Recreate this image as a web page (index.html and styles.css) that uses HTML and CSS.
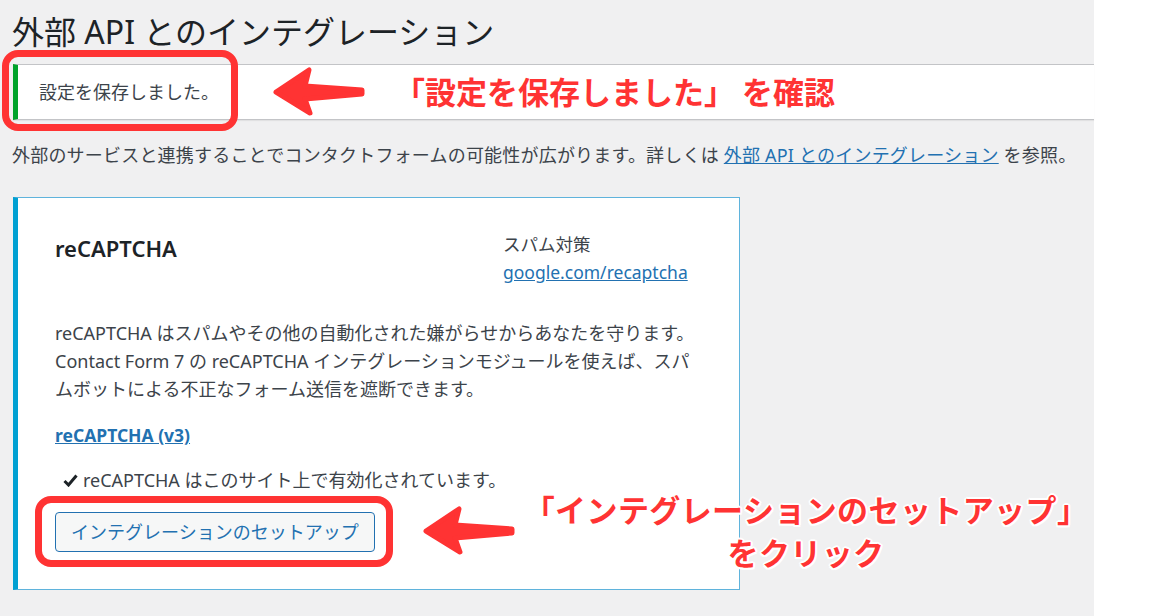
FILE: index.html
```html
<!DOCTYPE html>
<html lang="ja">
<head>
<meta charset="utf-8">
<title>外部 API とのインテグレーション</title>
<link rel="stylesheet" href="styles.css">
</head>
<body>
<div class="page">
  <h1 class="title">外部 API とのインテグレーション</h1>
  <div class="notice"><p>設定を保存しました。</p></div>
  <p class="intro">外部のサービスと連携することでコンタクトフォームの可能性が広がります。詳しくは <a href="#">外部 API とのインテグレーション</a> を参照。</p>

  <div class="card">
    <div class="card-head">
      <h2 class="card-title">reCAPTCHA</h2>
      <div class="infobox">
        <div>スパム対策</div>
        <a href="#">google.com/recaptcha</a>
      </div>
    </div>
    <p class="desc">reCAPTCHA はスパムやその他の自動化された嫌がらせからあなたを守ります。<br>Contact Form 7 の reCAPTCHA インテグレーションモジュールを使えば、スパ<br>ムボットによる不正なフォーム送信を遮断できます。</p>
    <p class="version"><a href="#">reCAPTCHA (v3)</a></p>
    <p class="status"><svg class="check" width="15" height="13" viewBox="0 0 15 13"><path d="M1.5 7 L5.5 11 L13.5 1.5" fill="none" stroke="#1d2327" stroke-width="3"/></svg>reCAPTCHA はこのサイト上で有効化されています。</p>
    <p class="action"><a href="#" class="button">インテグレーションのセットアップ</a></p>
  </div>

  <div class="mark mark-notice"></div>
  <svg class="arrow arrow-notice" width="100" height="60" viewBox="0 0 100 60"><path d="M6 30 L39 8 L35 24 L92 28 L92 32 L35 37 L40 51 Z" fill="#ff3333" stroke="#ff3333" stroke-width="5" stroke-linejoin="round"/></svg>
  <div class="label label-notice">「設定を保存しました」 を確認</div>

  <div class="mark mark-button"></div>
  <svg class="arrow arrow-button" width="100" height="60" viewBox="0 0 100 60"><path d="M6 30 L39 8 L35 24 L92 28 L92 32 L35 37 L40 51 Z" fill="#ff3333" stroke="#ff3333" stroke-width="5" stroke-linejoin="round"/></svg>
  <div class="label label-button">「インテグレーションのセットアップ」<br>をクリック</div>
</div>
</body>
</html>
```

FILE: styles.css
```css
* { box-sizing: border-box; }

html, body {
  margin: 0;
  background: #fff;
}

body {
  font-family: "Noto Sans", "Noto Sans CJK JP", sans-serif;
  color: #3c434a;
  font-size: 18px;
}

.page {
  position: relative;
  width: 1094px;
  min-height: 616px;
  background: #f0f0f1;
  padding: 11px 0 0 13px;
}

.title {
  margin: 0 0 0 -1px;
  font-size: 32px;
  line-height: 42px;
  font-weight: 400;
  color: #1d2327;
}

.notice {
  margin-top: 11px;
  background: #fff;
  border-top: 1px solid #c3c4c7;
  border-bottom: 1px solid #c3c4c7;
  border-left: 5px solid #00a32a;
  box-shadow: 0 1px 1px rgba(0, 0, 0, 0.06);
  padding: 14px 0 14px 21px;
}

.notice p {
  margin: 0;
  line-height: 26px;
  font-size: 18px;
}

.intro {
  margin: 22px 0 0 -1px;
  line-height: 26px;
  font-size: 18px;
  letter-spacing: 0.2px;
}

a {
  color: #2271b1;
  text-decoration: underline;
}

.card {
  margin-top: 29px;
  width: 727px;
  background: #fff;
  border: 1px solid #5fb3dc;
  border-left: 5px solid #00a0d2;
  padding: 32px 36px 37px 37px;
}

.card-head {
  display: flex;
  justify-content: space-between;
  align-items: flex-start;
}

.card-title {
  margin: 4px 0 0;
  font-size: 22px;
  line-height: 28px;
  font-weight: 600;
  color: #1d2327;
}

.infobox {
  width: 200px;
  line-height: 28px;
  font-size: 17.5px;
}

.desc {
  margin: 33px 0 0;
  line-height: 28px;
  font-size: 18px;
  white-space: nowrap;
}

.version {
  margin: 18px 0 0;
  line-height: 28px;
  font-size: 17.5px;
}

.version a {
  font-weight: 700;
}

.status {
  margin: 17px 0 0 8px;
  line-height: 28px;
  font-size: 18px;
  display: flex;
  align-items: center;
  gap: 5px;
}

.check {
  flex: none;
}

.action {
  margin: 18px 0 0;
}

.button {
  display: inline-block;
  height: 40px;
  line-height: 38px;
  padding: 0 15px;
  border: 1px solid #2271b1;
  border-radius: 4px;
  background: #f6f7f7;
  color: #2271b1;
  text-decoration: none;
  font-size: 18px;
}

/* annotations */
.mark {
  position: absolute;
  border: 7px solid #ff3333;
  border-radius: 16px;
}

.mark-notice {
  left: 2px;
  top: 50px;
  width: 236px;
  height: 81px;
}

.mark-button {
  left: 35px;
  top: 496px;
  width: 358px;
  height: 71px;
}

.arrow {
  position: absolute;
}

.arrow-notice {
  left: 270px;
  top: 62px;
}

.arrow-button {
  left: 420px;
  top: 501px;
}

.label {
  position: absolute;
  font-family: "Noto Sans CJK JP", sans-serif;
  font-weight: 700;
  color: #ff3333;
  white-space: nowrap;
  text-shadow: 2px 0 #fff, -2px 0 #fff, 0 2px #fff, 0 -2px #fff,
    1.5px 1.5px #fff, -1.5px 1.5px #fff, 1.5px -1.5px #fff, -1.5px -1.5px #fff;
}

.label-notice {
  left: 394px;
  top: 71px;
  font-size: 31px;
  line-height: 40px;
}

.label-button {
  left: 506px;
  top: 487px;
  width: 600px;
  text-align: center;
  font-size: 31px;
  line-height: 43px;
  letter-spacing: 0.4px;
}
```
